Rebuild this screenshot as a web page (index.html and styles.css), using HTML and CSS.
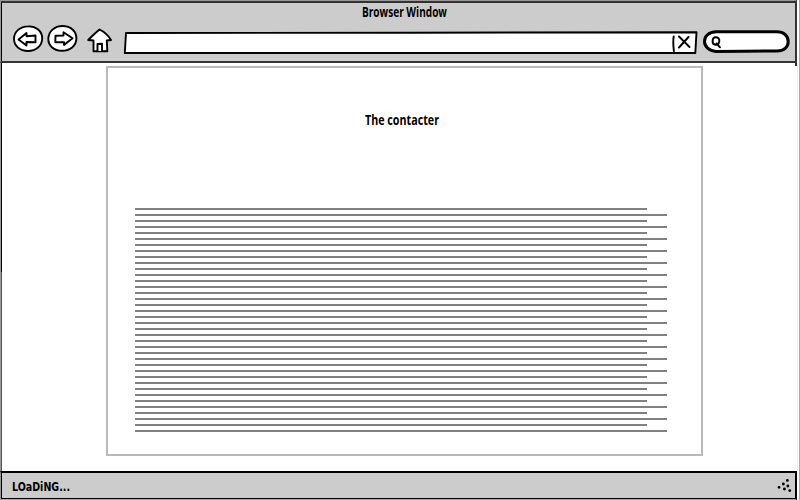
FILE: index.html
```html
<!DOCTYPE html>
<html lang="en">
<head>
<meta charset="utf-8">
<title>Browser Window</title>
<link rel="stylesheet" href="styles.css">
</head>
<body>
<div class="window">
  <header class="chrome">
    <svg class="title" width="95" height="22"><text x="4" y="15" textLength="85" lengthAdjust="spacingAndGlyphs">Browser Window</text></svg>
    <div class="toolbar">
      <svg class="back" width="31" height="28" viewBox="13 25 31 28"><path class="ink" d="M28 26.4C36 26 42.3 31 42.2 38.500C42 46 36 51 28 51C20 51 13.800 46 14 38.500C14.200 31.500 20 26.600 28 26.400Z"/><path class="ink" d="M18.500 39.500L26.500 33V36.200L35.500 35.500V42.300L26.500 42V45.500Z"/></svg>
      <svg class="forward" width="31" height="28" viewBox="47 25 31 28"><path class="ink" d="M62.500 26C70.500 26 76.500 31 76.400 38.500C76.200 46 70 50.800 62 50.800C54 50.800 48.200 46 48.300 38.800C48.500 31.500 54.500 26 62.500 26Z"/><path class="ink" d="M55.500 35.700L63.500 35.500V32.300L72.500 38.200L64 45V42.200L55.300 42.300Z"/></svg>
      <svg class="home" width="27" height="26" viewBox="86 27 27 26"><path class="ink" d="M99.500 29.500Q94 34 88.200 40L93.500 40.500V51.300H107.300L106.800 40.500L111 40Q107 33 99.500 29.500Z"/><path class="ink" d="M97.500 51V44L102 43.800V51"/></svg>
      <svg class="address" width="576" height="26" viewBox="123 30 576 26"><path class="ink" d="M126 33L411 32.700L696.500 32.300L695.300 53H124.800Z"/><path class="ink" d="M673.700 36.500Q672.800 42 673.900 51"/><path class="ink" d="M679 36.500L689.500 47M688.500 37L679 47.500"/></svg>
      <svg class="search" width="88" height="26" viewBox="702 29 88 26"><path class="ink heavy" d="M716 31.800H777C784 31.800 788.200 36 788.200 41.500C788.200 47 784 51 777 51L745 51.200L716 51.500C709 51 704.500 46.500 704.500 41.500C704.500 36 709 32 716 31.800Z"/><path class="ink" d="M715.500 37.300C718.500 37.300 719.500 39 719.300 41.300C719 43.600 717.500 44.800 715.500 44.700C713.500 44.600 712.500 43 712.600 41C712.700 38.800 713.500 37.300 715.500 37.300ZM716.500 43.500L720 47.300"/></svg>
    </div>
  </header>
  <main class="viewport">
    <article class="page">
      <h1><svg width="86" height="24"><text x="5" y="17" textLength="74" lengthAdjust="spacingAndGlyphs">The contacter</text></svg></h1>
      <div class="copy">
        <i></i><i></i><i></i><i></i><i></i><i></i><i></i><i></i><i></i><i></i><i></i><i></i><i></i><i></i><i></i><i></i><i></i><i></i><i></i>
        <i></i><i></i><i></i><i></i><i></i><i></i><i></i><i></i><i></i><i></i><i></i><i></i><i></i><i></i><i></i><i></i><i></i><i></i><i></i>
      </div>
    </article>
  </main>
  <footer class="status">
    <svg class="loading" width="72" height="23"><text x="4" y="16" textLength="58" lengthAdjust="spacingAndGlyphs">LOaDiNG...</text></svg>
    <svg class="grip" width="16" height="16" viewBox="777 478 16 16"><path d="M779 487.300h.1M783.300 484h.1M787.300 480.400h.1M784.400 489h.1M787.800 486h.1M789.700 490.600h.1"/></svg>
  </footer>
</div>
</body>
</html>
```

FILE: styles.css
```css
* { box-sizing: border-box; }
body { margin: 0; background: #fff; }
svg { overflow: visible; }
.window {
  width: 800px; height: 500px;
  display: grid; grid-template-rows: 63px 408px 29px;
  border-right: 1px solid #aaa;
}
.chrome {
  position: relative;
  margin-right: 2px;
  background: #ccc;
  border-top: 1px solid #999;
  border-left: 1px solid #999;
  border-bottom: 2px solid #333;
  border-right: 2px solid #333;
  box-shadow: inset 0 2px #333, inset 1px 0 #000;
}
/* The frame's right stroke overshoots the toolbar. */
.chrome::after {
  content: "";
  position: absolute; right: -2px; top: 100%;
  width: 2px; height: 5px;
  background: #333;
}
text { font: 700 13.5px "Open Sans", sans-serif; fill: #000; }
.title { display: block; margin: 1px 0 0 357px; }
.toolbar { display: flex; align-items: flex-start; padding-left: 12px; margin-top: -2px; }
.toolbar svg { flex: none; }
.back { margin-top: 3px; }
.forward { margin: 3px 0 0 3px; }
.home { margin: 5px 0 0 8px; }
.address { margin: 8px 0 0 10px; }
.search { margin: 7px 0 0 3px; }
.ink { fill: #fff; stroke: #000; stroke-width: 1.9; stroke-linejoin: round; stroke-linecap: round; }
.heavy { stroke-width: 3; }
.viewport {
  margin-right: 1px;
  padding: 3px 0 0 106px;
  background:
    linear-gradient(#999, #999) 0 0 / 1px 100% no-repeat,
    linear-gradient(#000 209px, #555 209px) 1px 0 / 1px 100% no-repeat;
  border-right: 1px solid #eee;
}
.page { width: 597px; height: 390px; border: 2px solid #b8b9bb; padding: 40px 27px 0; }
h1 { margin: 0 0 0 225px; height: 24px; line-height: 0; }
.copy { margin-top: 76px; display: grid; grid-auto-rows: 2px; row-gap: 4px; }
.copy i { background: #808080; width: 512px; }
.copy i:nth-child(even) { width: 532px; }
.status {
  margin-right: 2px;
  display: flex; justify-content: space-between; align-items: flex-start;
  background: #ccc;
  border: solid #000;
  border-width: 2px 2px 1px 1px;
  border-left-color: #999;
  border-bottom-color: #aaa;
  box-shadow: inset 1px -1px #000;
  padding: 2px 3px 0 7px;
}
.loading text { font: 700 12.5px "DejaVu Sans", sans-serif; }
.grip { margin: 3px -1px 0 0; }
.grip path { fill: none; stroke: #000; stroke-width: 2.8; stroke-linecap: round; }
```
